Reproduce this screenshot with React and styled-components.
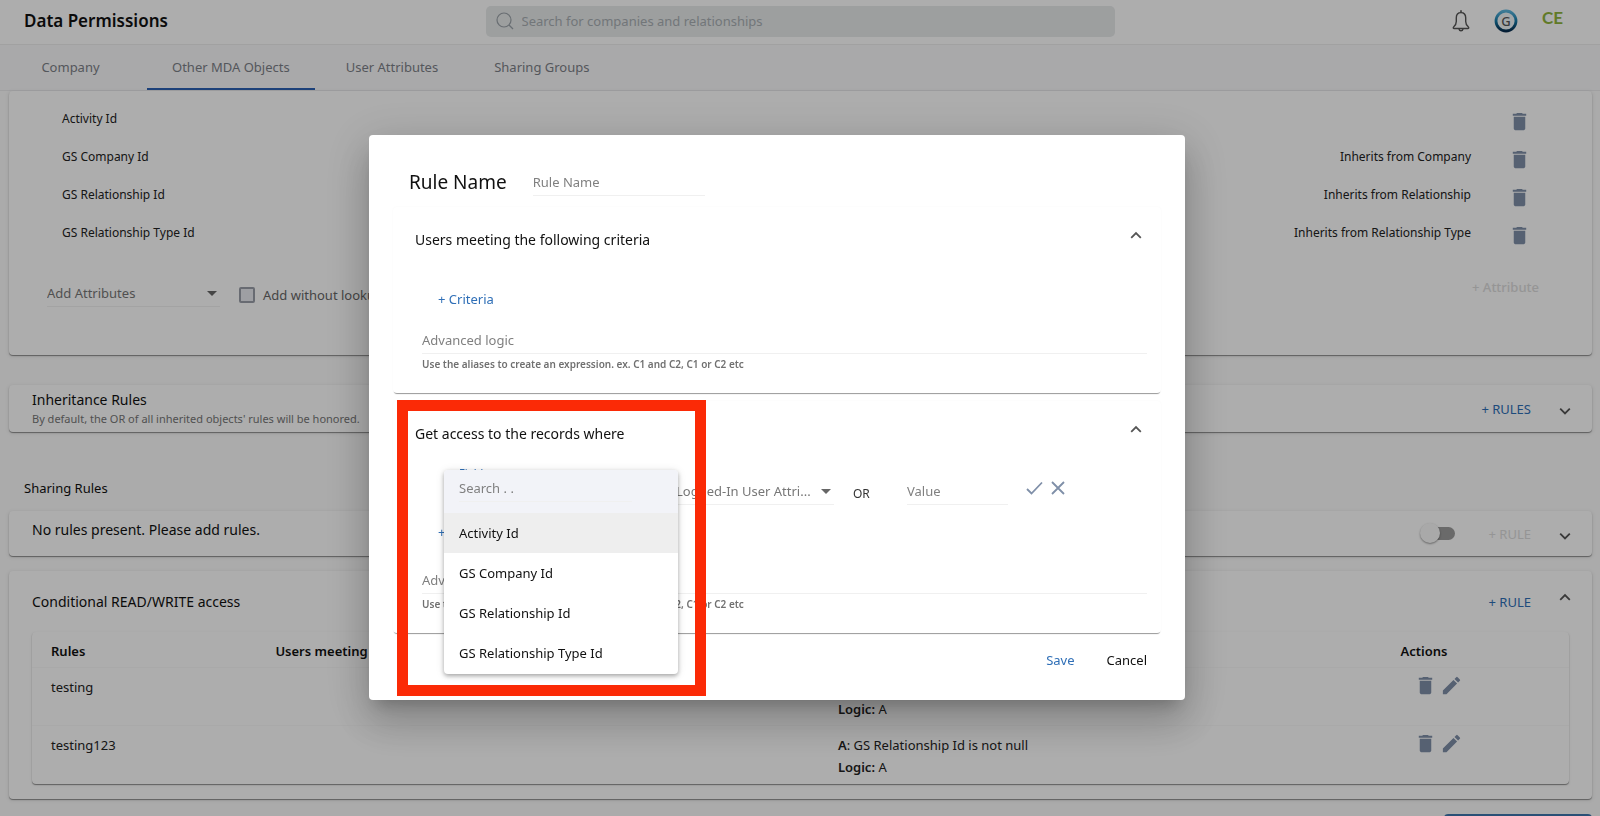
import { useState } from "react";
import styled, { createGlobalStyle } from "styled-components";

const attributes = [
  { name: "Activity Id", inherits: "" },
  { name: "GS Company Id", inherits: "Inherits from Company" },
  { name: "GS Relationship Id", inherits: "Inherits from Relationship" },
  { name: "GS Relationship Type Id", inherits: "Inherits from Relationship Type" },
];

const tabs = ["Company", "Other MDA Objects", "User Attributes", "Sharing Groups"];

const rules = [
  { name: "testing", record: "GS Relationship Id is not null", logic: "A" },
  { name: "testing123", record: "GS Relationship Id is not null", logic: "A" },
];

const TrashIcon = () => (
  <svg width="23" height="23" viewBox="0 0 24 24" fill="currentColor" aria-hidden="true">
    <path d="M6 7v12.4c0 .9.7 1.6 1.6 1.6h8.8c.9 0 1.6-.7 1.6-1.6V7H6zM19 4h-3.5l-1-1h-5l-1 1H5v2h14V4z" />
  </svg>
);

const PencilIcon = () => (
  <svg width="23" height="23" viewBox="0 0 24 24" fill="currentColor" aria-hidden="true">
    <path d="M3 17.25V21h3.75L17.81 9.94l-3.75-3.75L3 17.25zM20.71 7.04a1 1 0 0 0 0-1.41l-2.34-2.34a1 1 0 0 0-1.41 0l-1.83 1.83 3.75 3.75 1.83-1.83z" />
  </svg>
);

const Chevron = ({ up }) => (
  <svg width="24" height="24" viewBox="0 0 24 24" fill="none" stroke="currentColor" strokeWidth="1.8" aria-hidden="true">
    <path d={up ? "M7.2 14.8l4.8-4.8 4.8 4.8" : "M7.2 9.6l4.8 4.8 4.8-4.8"} />
  </svg>
);

const Caret = () => (
  <svg width="10" height="5" viewBox="0 0 10 5" fill="currentColor" aria-hidden="true">
    <path d="M0 0h10L5 5z" />
  </svg>
);

const SearchIcon = () => (
  <svg width="18" height="18" viewBox="0 0 18 18" fill="none" stroke="currentColor" strokeWidth="1.2" aria-hidden="true">
    <circle cx="8" cy="8" r="7" />
    <path d="M13 13l4 4" />
  </svg>
);

const BellIcon = () => (
  <svg width="18" height="22" viewBox="0 0 18 22" fill="none" stroke="currentColor" strokeWidth="1.4" strokeLinejoin="round" aria-hidden="true">
    <path d="M9 .3v2.200" strokeWidth="1.6" />
    <path d="M9 2.600c-2.900 0-4.700 2.200-4.700 5.200v3.800c0 2.300-.8 3.700-2.500 5.200-.9.800-.6 1.700.4 1.700h13.600c1 0 1.300-.9.4-1.700-1.700-1.500-2.500-2.900-2.500-5.200V7.800c0-3-1.800-5.200-4.700-5.200z" />
    <path d="M7 18.800c.2 1.400 1 2 2 2s1.800-.6 2-2" />
  </svg>
);

const LogoRing = () => (
  <svg width="24" height="24" viewBox="0 0 24 24" aria-hidden="true">
    <defs>
      <linearGradient id="ring" x1="0" y1="0" x2="0" y2="1">
        <stop offset="0" stopColor="#5cb6de" />
        <stop offset="0.5" stopColor="#157aa8" />
        <stop offset="1" stopColor="#062c4d" />
      </linearGradient>
    </defs>
    <circle cx="12" cy="12" r="10" fill="#f0f6f9" stroke="url(#ring)" strokeWidth="2.800" />
  </svg>
);

const CheckIcon = () => (
  <svg width="17" height="14" viewBox="0 0 17 14" fill="none" stroke="currentColor" strokeWidth="1.800" aria-hidden="true">
    <path d="M1 8l4.500 4.500L16 1.500" />
  </svg>
);

const CloseIcon = () => (
  <svg width="14" height="14" viewBox="0 0 14 14" fill="none" stroke="currentColor" strokeWidth="1.800" aria-hidden="true">
    <path d="M1 1l12 12M13 1L1 13" />
  </svg>
);

const CriteriaFooter = ({ id }) => (
  <>
    <LogicInput id={id} aria-label="Advanced logic" placeholder="Advanced logic" />
    <Hint htmlFor={id}>Use the aliases to create an expression. ex. C1 and C2, C1 or C2 etc</Hint>
  </>
);

const RuleDialog = () => {
  const [active, setActive] = useState("Activity Id");

  return (
    <Backdrop>
      <Dialog role="dialog" aria-modal="true" aria-labelledby="rule-title">
        <DialogHeader>
          <DialogTitle id="rule-title">Rule Name</DialogTitle>
          <LineInput $width="172px" aria-label="Rule Name" placeholder="Rule Name" />
        </DialogHeader>

        <Section>
          <SectionHead>
            <SectionTitle>Users meeting the following criteria</SectionTitle>
            <ToggleButton aria-label="Collapse criteria"><Chevron up /></ToggleButton>
          </SectionHead>
          <SectionBody>
            <AddCriteria $top="16px" $bottom="18px">+ Criteria</AddCriteria>
            <CriteriaFooter id="user-logic" />
          </SectionBody>
        </Section>

        <Section $spaced>
          <SectionHead>
            <SectionTitle>Get access to the records where</SectionTitle>
            <ToggleButton aria-label="Collapse records"><Chevron up /></ToggleButton>
          </SectionHead>
          <SectionBody>
            <Condition>
              <FieldBox>
                <FieldLabel htmlFor="field-search">Field</FieldLabel>
                <Menu>
                  <MenuSearch>
                    <LineInput id="field-search" $width="173px" placeholder="Search . ." />
                  </MenuSearch>
                  <MenuList role="listbox" aria-label="Field">
                    {attributes.map(({ name }) => (
                      <MenuItem
                        key={name}
                        role="option"
                        aria-selected={name === active}
                        $active={name === active}
                        onClick={() => setActive(name)}
                      >
                        {name}
                      </MenuItem>
                    ))}
                  </MenuList>
                </Menu>
              </FieldBox>
              <SelectBox $width="158px">
                <LineSelect aria-label="Logged-In User Attribute">
                  <option>Logged-In User Attri...</option>
                </LineSelect>
                <Caret />
              </SelectBox>
              <Or>OR</Or>
              <LineInput $width="101px" aria-label="Value" placeholder="Value" />
              <ConditionActions>
                <IconButton aria-label="Apply"><CheckIcon /></IconButton>
                <IconButton aria-label="Discard"><CloseIcon /></IconButton>
              </ConditionActions>
            </Condition>
            <AddCriteria $top="17px" $bottom="25px">+ Criteria</AddCriteria>
            <CriteriaFooter id="record-logic" />
          </SectionBody>
          <Highlight />
        </Section>

        <DialogFooter>
          <TextButton>Save</TextButton>
          <TextButton $tone="dark">Cancel</TextButton>
        </DialogFooter>
      </Dialog>
    </Backdrop>
  );
};

const App = () => (
  <Page>
    <GlobalStyle />
    <Header>
      <PageTitle>Data Permissions</PageTitle>
      <SearchBar>
        <SearchIcon />
        <input aria-label="Search" placeholder="Search for companies and relationships" />
      </SearchBar>
      <HeaderActions>
        <IconButton $tone="dark" aria-label="Notifications"><BellIcon /></IconButton>
        <Logo href="#"><LogoRing /><span>G</span></Logo>
        <Initials href="#">CE</Initials>
      </HeaderActions>
    </Header>
    <Tabs>
      {tabs.map((tab) => (
        <Tab key={tab} href="#" $active={tab === "Other MDA Objects"}>{tab}</Tab>
      ))}
    </Tabs>

    <Content>
      <AttributeCard>
        {attributes.map(({ name, inherits }) => (
          <AttributeRow key={name}>
            <span>{name}</span>
            <span>{inherits}</span>
            <IconButton aria-label={`Delete ${name}`}><TrashIcon /></IconButton>
          </AttributeRow>
        ))}
        <AddRow>
          <SelectBox $width="173px">
            <LineSelect aria-label="Add Attributes">
              <option>Add Attributes</option>
            </LineSelect>
            <Caret />
          </SelectBox>
          <CheckLabel>
            <input type="checkbox" />
            Add without lookup
          </CheckLabel>
          <TextButton disabled $bold>+ Attribute</TextButton>
        </AddRow>
      </AttributeCard>

      <InheritanceCard>
        <div>
          <CardTitle>Inheritance Rules</CardTitle>
          <CardNote>By default, the OR of all inherited objects' rules will be honored.</CardNote>
        </div>
        <CardActions>
          <TextButton>+ RULES</TextButton>
          <ExpandButton aria-label="Expand inheritance rules"><Chevron /></ExpandButton>
        </CardActions>
      </InheritanceCard>

      <GroupTitle>Sharing Rules</GroupTitle>
      <SharingCard>
        <CardTitle>No rules present. Please add rules.</CardTitle>
        <CardActions>
          <Switch type="checkbox" role="switch" aria-label="Enable sharing rules" />
          <TextButton disabled>+ RULE</TextButton>
          <ExpandButton aria-label="Expand sharing rules"><Chevron /></ExpandButton>
        </CardActions>
      </SharingCard>

      <ConditionalCard>
        <CardHead>
          <CardTitle>Conditional READ/WRITE access</CardTitle>
          <CardActions>
            <TextButton>+ RULE</TextButton>
            <ToggleButton aria-label="Collapse conditional access"><Chevron up /></ToggleButton>
          </CardActions>
        </CardHead>
        <RulesTable>
          <thead>
            <tr>
              <th>Rules</th>
              <th>Users meeting criteria</th>
              <th>Records</th>
              <th>Actions</th>
            </tr>
          </thead>
          <tbody>
            {rules.map(({ name, record, logic }) => (
              <tr key={name}>
                <td>{name}</td>
                <td />
                <td>
                  <b>A</b>: {record}
                  <br />
                  <b>Logic:</b> {logic}
                </td>
                <td>
                  <RowActions>
                    <IconButton aria-label={`Delete ${name}`}><TrashIcon /></IconButton>
                    <IconButton aria-label={`Edit ${name}`}><PencilIcon /></IconButton>
                  </RowActions>
                </td>
              </tr>
            ))}
          </tbody>
        </RulesTable>
      </ConditionalCard>
      <SaveButton aria-label="Save permissions" />
    </Content>

    <RuleDialog />
  </Page>
);

const GlobalStyle = createGlobalStyle`
  * {
    box-sizing: border-box;
  }
  body {
    margin: 0;
    font-family: "Noto Sans", "Liberation Sans", sans-serif;
    font-size: 13px;
    line-height: 20px;
    color: #222;
  }
  button, input, select {
    font: inherit;
    color: inherit;
    margin: 0;
  }
  h1, h2, p {
    margin: 0;
  }
  a {
    text-decoration: none;
  }
  svg {
    display: block;
    flex: none;
  }
`;

const Page = styled.div`
  height: 100vh;
  overflow: hidden;
  background: #fcfcfc;
`;

const Header = styled.header`
  display: grid;
  grid-template-columns: 1fr minmax(0, 629px) 1fr;
  align-items: center;
  height: 45px;
  padding: 0 24px 2px;
  border-bottom: 1px solid #eeeeee;
  background: #fff;
`;

const PageTitle = styled.h1`
  font-size: 17px;
  font-weight: 600;
  color: #111;
`;

const SearchBar = styled.label`
  display: flex;
  align-items: center;
  gap: 8px;
  height: 31px;
  padding: 0 10px;
  border-radius: 5px;
  background: #e7eaeb;
  color: #9ba2a8;
  input {
    flex: 1;
    border: 0;
    padding: 0;
    outline: 0;
    background: transparent;
  }
  input::placeholder {
    color: #a9afb3;
    opacity: 1;
  }
`;

const HeaderActions = styled.div`
  display: flex;
  align-items: center;
  justify-content: flex-end;
  gap: 24px;
  padding-right: 13px;
`;

const Logo = styled.a`
  display: grid;
  place-items: center;
  color: #555;
  font-size: 13px;
  font-weight: 500;
  > * {
    grid-area: 1 / 1;
  }
`;

const Initials = styled.a`
  padding-bottom: 6px;
  font-family: Lato, "Noto Sans", sans-serif;
  font-size: 17px;
  font-weight: 700;
  color: #8fb43c;
`;

const Tabs = styled.nav`
  display: flex;
  gap: 6px;
  height: 46px;
  border-bottom: 1px solid #ececee;
  background: #f9f9fb;
`;

const Tab = styled.a`
  display: flex;
  align-items: center;
  justify-content: center;
  min-width: 141px;
  padding: 0 25px;
  color: #7d8188;
  border-bottom: 2px solid ${({ $active }) => ($active ? "#2c62b5" : "transparent")};
`;

const Content = styled.main`
  display: flex;
  flex-direction: column;
  padding: 0 8px 0 9px;
`;

const Card = styled.section`
  flex: none;
  background: #fff;
  border-radius: 4px;
  box-shadow: 0 1px 1px rgba(0, 0, 0, 0.4), 0 1px 4px rgba(0, 0, 0, 0.12);
`;

const AttributeCard = styled(Card)`
  padding: 11px 53px 0;
`;

const AttributeRow = styled.div`
  display: grid;
  grid-template-columns: 1fr auto 31px;
  column-gap: 37px;
  align-items: center;
  height: 38px;
  font-size: 12px;
  > span {
    padding-bottom: 4px;
  }
`;

const CheckLabel = styled.label`
  display: flex;
  align-items: center;
  gap: 8px;
  height: 32px;
  margin-left: 19px;
  color: #666;
  input {
    appearance: none;
    width: 16px;
    height: 16px;
    border: 2px solid #9a9ea8;
    border-radius: 2px;
    background: #e9ebf0;
  }
`;

const RowCard = styled(Card)`
  display: flex;
  align-items: center;
  justify-content: space-between;
  padding: 0 15px 0 23px;
`;

const InheritanceCard = styled(RowCard)`
  height: 47px;
  margin-top: 30px;
`;

const SharingCard = styled(RowCard)`
  height: 45px;
  h2 {
    padding-bottom: 8px;
  }
`;

const ConditionalCard = styled(Card)`
  margin-top: 15px;
  padding: 0 23px 15px;
`;

const CardHead = styled.div`
  display: flex;
  align-items: center;
  justify-content: space-between;
  height: 61px;
  margin-right: -8px;
`;

const CardTitle = styled.h2`
  font-size: 14px;
  font-weight: 400;
  line-height: 20px;
  color: #111;
`;

const CardNote = styled.p`
  font-size: 11px;
  line-height: 18px;
  color: #777;
`;

const CardActions = styled.div`
  display: flex;
  align-items: center;
  gap: 22px;
`;

const GroupTitle = styled.h2`
  margin: 46px 15px 13px;
  font-size: 13px;
  font-weight: 400;
  color: #111;
`;

const TextButton = styled.button`
  padding: 0;
  border: 0;
  background: none;
  font-weight: ${({ $bold }) => ($bold ? 500 : 400)};
  color: ${({ $tone }) => ($tone === "dark" ? "#111" : "#2f6fb7")};
  &:disabled {
    color: #dcdcdc;
  }
`;

const IconButton = styled.button`
  display: flex;
  padding: 0;
  border: 0;
  background: none;
  color: ${({ $tone }) => ($tone === "dark" ? "#555" : "#7f8fa8")};
`;

const ToggleButton = styled(IconButton)`
  padding-bottom: 10px;
  color: #555;
`;

const ExpandButton = styled(IconButton)`
  padding-top: 4px;
  color: #555;
`;

const Switch = styled.input`
  appearance: none;
  position: relative;
  width: 27px;
  height: 13px;
  margin-right: 12px;
  border-radius: 7px;
  background: #9c9c9c;
  &::before {
    content: "";
    position: absolute;
    left: -8px;
    top: -4px;
    width: 20px;
    height: 20px;
    border-radius: 50%;
    background: #fafafa;
    box-shadow: 0 1px 2px rgba(0, 0, 0, 0.4);
  }
`;

const RulesTable = styled.table`
  width: 100%;
  table-layout: fixed;
  border-spacing: 0;
  border-radius: 4px;
  box-shadow: 0 1px 1px rgba(0, 0, 0, 0.4), 0 1px 3px rgba(0, 0, 0, 0.1);
  th,
  td {
    padding: 8px 0 6px 19px;
    text-align: left;
    vertical-align: top;
    line-height: 22px;
  }
  th {
    font-weight: 600;
    color: #111;
  }
  th:nth-child(1) {
    width: 14.6%;
  }
  th:nth-child(2),
  th:nth-child(3) {
    width: 36.6%;
  }
  td {
    height: 58px;
  }
  td:last-child {
    padding-top: 6px;
  }
  tbody td {
    box-shadow: 0 -1px 0 rgba(0, 0, 0, 0.02);
  }
  b {
    font-weight: 600;
  }
`;

const RowActions = styled.div`
  display: flex;
  gap: 3px;
  padding-left: 14px;
`;

const SaveButton = styled.button`
  flex: none;
  align-self: flex-end;
  width: 148px;
  height: 36px;
  margin-top: 15px;
  border: 0;
  border-radius: 4px;
  background: #3f76ae;
`;

/* underlined form controls */

const LineInput = styled.input`
  display: block;
  width: ${({ $width }) => $width};
  height: 27px;
  padding: 0;
  border: 0;
  border-bottom: 1px solid #f0f0f0;
  border-radius: 0;
  outline: 0;
  background: transparent;
  &::placeholder {
    color: #808080;
    opacity: 1;
  }
`;

const SelectBox = styled.div`
  display: grid;
  align-items: center;
  width: ${({ $width }) => $width};
  color: #666;
  > * {
    grid-area: 1 / 1;
  }
  > svg {
    justify-self: end;
    margin-right: 3px;
    pointer-events: none;
  }
`;

const LineSelect = styled.select`
  appearance: none;
  width: 100%;
  height: 27px;
  padding: 0;
  border: 0;
  border-bottom: 1px solid #f0f0f0;
  border-radius: 0;
  background: transparent;
  color: #777;
`;

const AddRow = styled.div`
  display: flex;
  align-items: flex-start;
  height: 101px;
  padding-top: 25px;
  margin-left: -15px;
  > div {
    margin-top: 1px;
  }
  > button {
    margin-left: auto;
    line-height: 16px;
  }
`;

/* rule dialog */

const Backdrop = styled.div`
  position: fixed;
  inset: 0;
  display: grid;
  place-items: center;
  padding: 19px 46px 0 0;
  background: rgba(0, 0, 0, 0.32);
`;

const Dialog = styled.div`
  width: 51vw;
  padding: 0 24px;
  border-radius: 4px;
  background: #fff;
  box-shadow: 0 11px 15px -7px rgba(0, 0, 0, 0.2), 0 24px 38px 3px rgba(0, 0, 0, 0.14),
    0 9px 46px 8px rgba(0, 0, 0, 0.12);
`;

const DialogHeader = styled.div`
  display: flex;
  align-items: center;
  gap: 26px;
  padding: 34px 0 11px 16px;
`;

const DialogTitle = styled.h1`
  font-size: 19px;
  font-weight: 400;
  line-height: 27px;
  color: #111;
`;

const Section = styled.section`
  position: relative;
  padding-bottom: 22px;
  margin-top: ${({ $spaced }) => ($spaced ? "8px" : "0")};
  border-radius: 4px;
  box-shadow: 0 2px 1px -1px rgba(0, 0, 0, 0.4), 0 0 2px rgba(0, 0, 0, 0.04);
`;

const SectionHead = styled.div`
  display: flex;
  align-items: center;
  justify-content: space-between;
  height: 66px;
  padding: 0 13px 0 22px;
`;

const SectionTitle = styled.h2`
  font-size: 14px;
  font-weight: 400;
  color: #111;
`;

const SectionBody = styled.div`
  padding: 0 14px 0 29px;
`;

const AddCriteria = styled(TextButton)`
  display: block;
  margin: ${({ $top, $bottom }) => `${$top} 0 ${$bottom} 16px`};
`;

const LogicInput = styled(LineInput)`
  width: 100%;
`;

const Hint = styled.label`
  display: block;
  margin-top: 3px;
  font-size: 10px;
  font-weight: 600;
  line-height: 14px;
  color: #707070;
`;

const Condition = styled.div`
  display: flex;
  padding: 11px 0 0 37px;
`;

const FieldBox = styled.div`
  position: relative;
  width: 190px;
  margin-right: 27px;
`;

const FieldLabel = styled.label`
  position: absolute;
  top: -12px;
  left: 0;
  font-size: 11px;
  line-height: 14px;
  color: #2f6fb7;
`;

const Menu = styled.div`
  position: absolute;
  top: -8px;
  left: -15px;
  z-index: 2;
  width: 234px;
  border-radius: 4px;
  background: #fff;
  box-shadow: 0 2px 4px rgba(0, 0, 0, 0.3), 0 1px 10px rgba(0, 0, 0, 0.1);
`;

const MenuSearch = styled.div`
  height: 43px;
  padding: 5px 15px 0;
  border-radius: 4px 4px 0 0;
  background: #f2f3f8;
`;

const MenuList = styled.ul`
  margin: 0;
  padding: 0 0 1px;
  list-style: none;
`;

const MenuItem = styled.li`
  padding: 0 15px;
  line-height: 40px;
  color: #111;
  background: ${({ $active }) => ($active ? "#eeeeee" : "transparent")};
`;

const Or = styled.span`
  width: 16px;
  margin: 0 38px 0 19px;
  padding-top: 6px;
  font-size: 12px;
  color: #333;
`;

const ConditionActions = styled.div`
  display: flex;
  align-items: flex-start;
  gap: 8px;
  padding: 3px 0 0 18px;
`;

/* call-out frame over the field picker */
const Highlight = styled.div`
  position: absolute;
  top: -1px;
  left: 4px;
  z-index: 3;
  width: 309px;
  height: 296px;
  border: 11px solid #fb2a06;
  pointer-events: none;
`;

const DialogFooter = styled.div`
  display: flex;
  justify-content: flex-end;
  gap: 32px;
  padding: 17px 14px 30px 0;
`;

export default App;
